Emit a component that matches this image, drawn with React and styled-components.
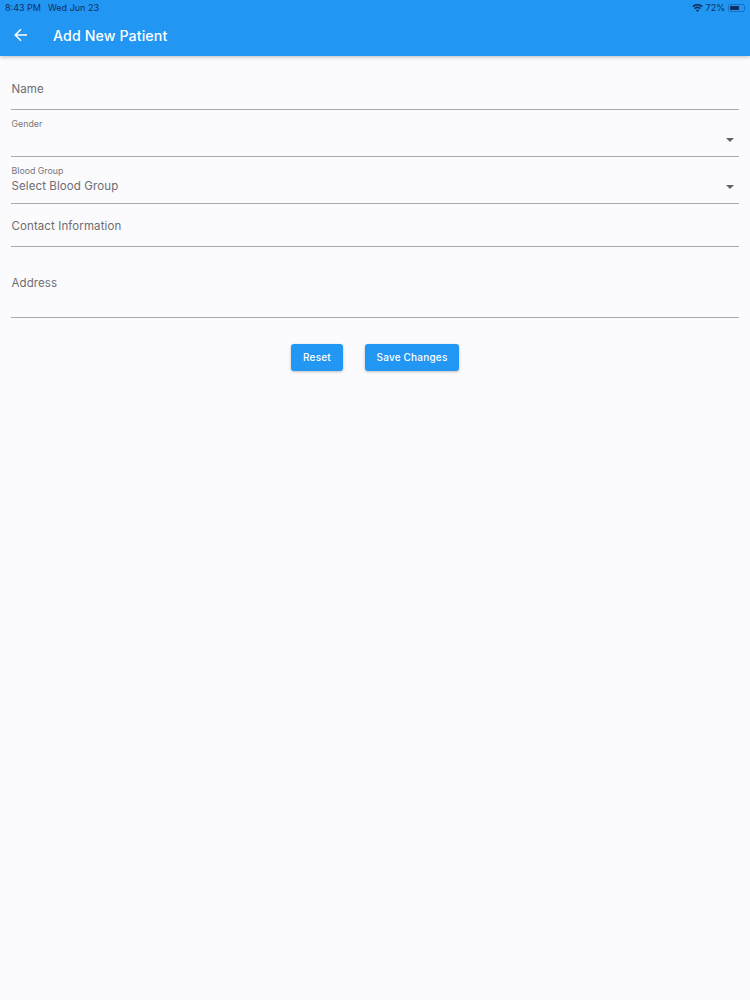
import React from "react";
import styled, { createGlobalStyle } from "styled-components";

const GlobalStyle = createGlobalStyle`
  html, body {
    margin: 0;
    padding: 0;
    background: #fbfafd;
    font-family: Inter, "Liberation Sans", sans-serif;
  }
`;

const Page = styled.div`
  width: 750px;
  height: 1000px;
  overflow: hidden;
  background: #fbfafd;
`;

const Header = styled.header`
  height: 56px;
  box-sizing: border-box;
  background: #2196f3;
  box-shadow: 0 1px 4px rgba(0, 0, 0, 0.25);
`;

const StatusBar = styled.div`
  height: 15px;
  padding: 0 5px 0 5px;
  display: flex;
  align-items: center;
  justify-content: space-between;
  font-size: 9px;
  color: #0f2f63;
`;

const StatusGroup = styled.div`
  display: flex;
  align-items: center;
  gap: ${(p) => p.$gap}px;
`;

const Battery = styled.div`
  width: 17px;
  height: 8px;
  box-sizing: border-box;
  border: 1px solid rgba(15, 47, 99, 0.35);
  border-radius: 2px;
  padding: 1px;
  display: flex;
  &::before {
    content: "";
    width: 72%;
    background: #0f2f63;
    border-radius: 1px;
  }
`;

const AppBar = styled.div`
  height: 41px;
  padding: 0 0 1px 14px;
  box-sizing: border-box;
  display: flex;
  align-items: center;
  gap: 18px;
  color: #fff;
`;

const BackButton = styled.div`
  width: 21px;
  height: 14px;
  display: flex;
  align-items: center;
`;

const Title = styled.h1`
  margin: 0;
  font-size: 14.2px;
  font-weight: 500;
  letter-spacing: 0.1px;
`;

const Form = styled.form`
  padding: 0 11px 0 11px;
`;

const Field = styled.div`
  height: ${(p) => p.$h}px;
  box-sizing: border-box;
  border-bottom: 1px solid #a9a9ad;
  position: relative;
  padding-top: ${(p) => p.$top}px;
`;

const Small = styled.div`
  font-size: 8.8px;
  line-height: 11px;
  margin-left: 0.5px;
  color: #77777b;
`;

const Value = styled.div`
  font-size: 11.5px;
  line-height: 15px;
  margin-top: ${(p) => p.$mt || 0}px;
  margin-left: 0.5px;
  letter-spacing: 0.1px;
  color: #6d6d72;
`;

const Caret = styled.span`
  position: absolute;
  right: 5px;
  bottom: ${(p) => p.$bottom}px;
  width: 0;
  height: 0;
  border-left: 4px solid transparent;
  border-right: 4px solid transparent;
  border-top: 4px solid #626266;
`;

const Actions = styled.div`
  display: flex;
  justify-content: center;
  gap: 22px;
  padding-top: 26px;
`;

const Button = styled.button`
  height: 27px;
  width: ${(p) => p.$w}px;
  padding: 0 0 2px;
  border: none;
  border-radius: 3px;
  background: #2196f3;
  color: #fff;
  font-family: inherit;
  font-size: 10px;
  font-weight: 500;
  letter-spacing: 0.2px;
  box-shadow: 0 1px 3px rgba(0, 0, 0, 0.25);
`;

export default function App() {
  return (
    <Page>
      <GlobalStyle />
      <Header>
        <StatusBar>
          <StatusGroup $gap={7}>
            <span>8:43 PM</span>
            <span>Wed Jun 23</span>
          </StatusGroup>
          <StatusGroup $gap={3}>
            <svg width="11" height="8" viewBox="0 0 24 18" fill="#0f2f63">
              <path d="M12 18l-3.6-4.2a5.5 5.5 0 0 1 7.2 0zM6.7 11.8 4.4 9.1a11.5 11.5 0 0 1 15.2 0l-2.3 2.7a8 8 0 0 0-10.6 0zM2.7 7.1.3 4.4a17.5 17.5 0 0 1 23.4 0l-2.4 2.7a14 14 0 0 0-18.6 0z" />
            </svg>
            <span>72%</span>
            <Battery />
          </StatusGroup>
        </StatusBar>
        <AppBar>
          <BackButton>
            <svg width="14" height="14" viewBox="0 0 14 14" fill="none" stroke="#fff" strokeWidth="1.5">
              <path d="M13 7H1.5M7 1.2 1.2 7 7 12.8" />
            </svg>
          </BackButton>
          <Title>Add New Patient</Title>
        </AppBar>
      </Header>
      <Form>
        <Field $h={54} $top={26}>
          <Value>Name</Value>
        </Field>
        <Field $h={47} $top={8}>
          <Small>Gender</Small>
          <Caret $bottom={14} />
        </Field>
        <Field $h={47} $top={8}>
          <Small>Blood Group</Small>
          <Value $mt={3}>Select Blood Group</Value>
          <Caret $bottom={14} />
        </Field>
        <Field $h={43} $top={15}>
          <Value>Contact Information</Value>
        </Field>
        <Field $h={71} $top={29}>
          <Value>Address</Value>
        </Field>
        <Actions>
          <Button type="button" $w={52}>Reset</Button>
          <Button type="button" $w={94}>Save Changes</Button>
        </Actions>
      </Form>
    </Page>
  );
}
